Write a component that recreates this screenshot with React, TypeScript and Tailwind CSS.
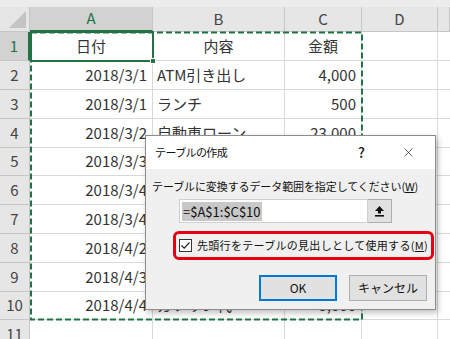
import React from 'react';
import { X } from 'lucide-react';

const font = { fontFamily: '"Noto Sans CJK JP", "Noto Sans", sans-serif' };

const cols = ['A', 'B', 'C', 'D', ''];

const rows: [string, string, string][] = [
  ['日付', '内容', '金額'],
  ['2018/3/1', 'ATM引き出し', '4,000'],
  ['2018/3/1', 'ランチ', '500'],
  ['2018/3/2', '自動車ローン', '23,000'],
  ['2018/3/3', '家賃', '80,000'],
  ['2018/3/4', '電気代', '6,200'],
  ['2018/3/4', 'ガス代', '3,800'],
  ['2018/4/2', '書籍', '1,500'],
  ['2018/4/3', '外食', '4,200'],
  ['2018/4/4', 'ガソリン代', '3,000'],
  ['', '', ''],
];

// 行の高さ (Excelの28.8pxを整数で近似)
const heights = ['h-[29px]', 'h-[29px]', 'h-[29px]', 'h-[29px]', 'h-[28px]', 'h-[29px]', 'h-[29px]', 'h-[29px]', 'h-[29px]', 'h-[28px]', 'h-[29px]'];

const Sheet: React.FC = () => (
  <div className="grid grid-cols-[30px_123px_132px_77px_76px_1fr] text-[15px] text-[#333]">
    {/* column headers */}
    <div className="relative h-[25px] bg-[#e6e6e6] border-r border-b border-[#c6c6c6]">
      <div className="absolute right-[3px] bottom-[3px] w-0 h-0 border-l-[17px] border-l-transparent border-b-[17px] border-b-[#c4c4c4]" />
    </div>
    {cols.map((c, i) => (
      <div
        key={i}
        className={
          i === 0
            ? 'h-[25px] flex items-center justify-center bg-[#d2d2d2] text-[#217346] border-r border-b-2 border-r-[#c6c6c6] border-b-[#217346]'
            : 'h-[25px] flex items-center justify-center bg-[#e6e6e6] text-[#444] border-r border-b border-[#c6c6c6]'
        }
      >
        {c}
      </div>
    ))}

    {rows.map((r, ri) => (
      <React.Fragment key={ri}>
        <div
          className={
            ri === 0
              ? `${heights[ri]} flex items-center justify-center bg-[#d2d2d2] text-[#217346] border-b border-r-2 border-b-[#c6c6c6] border-r-[#217346]`
              : `${heights[ri]} flex items-center justify-center bg-[#e6e6e6] text-[#444] border-r border-b border-[#c6c6c6]`
          }
        >
          {ri + 1}
        </div>
        <div className={`${heights[ri]} flex items-center ${ri === 0 ? 'justify-center' : 'justify-end pr-[5px]'} bg-white border-r border-b border-[#d9d9d9] whitespace-nowrap`}>
          {r[0]}
        </div>
        <div className={`${heights[ri]} flex items-center ${ri === 0 ? 'justify-center' : 'justify-start pl-[4px]'} bg-white border-r border-b border-[#d9d9d9] whitespace-nowrap overflow-hidden`}>
          {r[1]}
        </div>
        <div className={`${heights[ri]} flex items-center ${ri === 0 ? 'justify-center' : 'justify-end pr-[5px]'} bg-white border-r border-b border-[#d9d9d9] whitespace-nowrap`}>
          {r[2]}
        </div>
        <div className={`${heights[ri]} bg-white border-r border-b border-[#d9d9d9]`} />
        <div className={`${heights[ri]} bg-white border-b border-[#d9d9d9]`} />
      </React.Fragment>
    ))}
  </div>
);

const RefUpIcon: React.FC = () => (
  <svg width="11" height="12" viewBox="0 0 11 12">
    <path d="M5.5 1 L10 6 L7 6 L7 8.5 L4 8.5 L4 6 L1 6 Z" fill="#111" />
    <rect x="1" y="10" width="9" height="1.6" fill="#111" />
  </svg>
);

const CreateTableDialog: React.FC = () => (
  <div className="absolute left-[145px] top-[135px] w-[291px] h-[175px] bg-[#f0f0f0] border border-[#8c8c8c] shadow-[2px_3px_6px_rgba(0,0,0,0.25)] flex flex-col text-[11px] text-[#111]">
    {/* title bar */}
    <div className="h-[33px] bg-white flex items-center pl-[9px] pr-[19px]">
      <span className="flex-1 tracking-[-0.6px]">テーブルの作成</span>
      <span className="text-[14px] font-medium mr-[36px]">?</span>
      <X size={15} strokeWidth={1.1} color="#222" />
    </div>

    <div className="flex flex-col pt-[9px] pl-[6px]">
      <div className="flex tracking-[-0.1px] leading-[16px] whitespace-nowrap">
        <span>テーブルに変換するデータ範囲を指定してください(</span>
        <span className="underline">W</span>
        <span>)</span>
      </div>

      {/* range input */}
      <div className="flex mt-[5px] ml-[27px]">
        <div className="w-[189px] h-[24px] bg-white border border-[#d0d0d0] flex items-center pl-[2px]">
          <span className="bg-[#c8c8c8] text-[13px] leading-[19px] px-[1px] text-[#111]">=$A$1:$C$10</span>
        </div>
        <div className="w-[24px] h-[24px] bg-[#e1e1e1] border border-[#adadad] border-l-0 flex items-center justify-center">
          <RefUpIcon />
        </div>
      </div>

      {/* checkbox (highlighted) */}
      <div className="mt-[8px] ml-[21px] w-[261px] h-[29px] border-[3px] border-[#e60012] rounded-[6px] flex items-center pl-[3px]">
        <div className="w-[13px] h-[13px] border border-[#333] bg-white flex items-center justify-center mr-[5px]">
          <svg width="11" height="11" viewBox="0 0 11 11">
            <path d="M1.5 5.5 L4.2 8.2 L9.5 2.5" stroke="#222" strokeWidth="1.2" fill="none" />
          </svg>
        </div>
        <div className="flex tracking-[0.3px] whitespace-nowrap">
          <span>先頭行をテーブルの見出しとして使用する(</span>
          <span className="underline">M</span>
          <span>)</span>
        </div>
      </div>
    </div>

    {/* buttons */}
    <div className="flex gap-[12px] mt-[15px] ml-[113px]">
      <button className="w-[78px] h-[26px] bg-[#e1e1e1] border-2 border-[#0078d7] text-[12px] text-[#111]">OK</button>
      <button className="w-[78px] h-[26px] bg-[#e1e1e1] border border-[#adadad] text-[12px] text-[#111]">キャンセル</button>
    </div>
  </div>
);

const App: React.FC = () => {
  return (
    <div className="relative w-[450px] h-[339px] overflow-hidden bg-white" style={font}>
      <div className="h-[7px] bg-[#ececec]" />
      <Sheet />

      {/* marching ants around A1:C10 */}
      <svg className="absolute left-0 top-0 pointer-events-none" width="450" height="339">
        <rect x="31" y="32.5" width="331" height="287" fill="none" stroke="#217346" strokeWidth="2" strokeDasharray="6 3" />
      </svg>

      {/* active cell A1 */}
      <div className="absolute left-[30px] top-[31px] w-[124px] h-[31px] border-2 border-[#217346] pointer-events-none" />
      <div className="absolute left-[150px] top-[58px] w-[6px] h-[6px] bg-[#217346] border border-white pointer-events-none" />

      <CreateTableDialog />
    </div>
  );
};

export default App;
